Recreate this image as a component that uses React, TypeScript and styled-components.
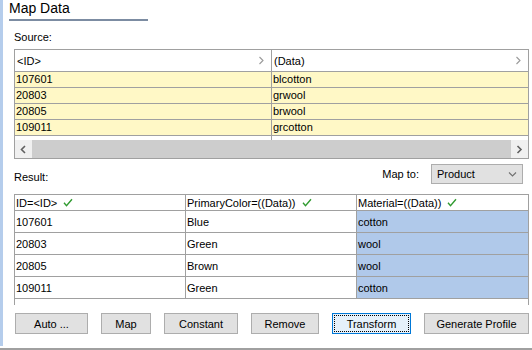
import React from "react";
import styled, { createGlobalStyle } from "styled-components";

const GlobalStyle = createGlobalStyle`
  body {
    margin: 0;
    background: #fff;
    font-family: "Liberation Sans", Arial, sans-serif;
    font-size: 11px;
    color: #000;
  }
`;

const sourceRows = [
  ["107601", "blcotton"],
  ["20803", "grwool"],
  ["20805", "brwool"],
  ["109011", "grcotton"],
];

const resultHeaders = ["ID=<ID>", "PrimaryColor=((Data))", "Material=((Data))"];

const resultRows = [
  ["107601", "Blue", "cotton"],
  ["20803", "Green", "wool"],
  ["20805", "Brown", "wool"],
  ["109011", "Green", "cotton"],
];

const buttons = [
  { label: "Auto ...", width: 73 },
  { label: "Map", width: 50 },
  { label: "Constant", width: 74 },
  { label: "Remove", width: 68 },
  { label: "Transform", width: 79, focused: true },
  { label: "Generate Profile", width: 105 },
];

const Chevron: React.FC<{ dir: "left" | "right" | "down"; color: string; bold?: boolean }> = ({
  dir,
  color,
  bold,
}) => {
  const d =
    dir === "left" ? "M5 1 L1.5 4.5 L5 8" : dir === "right" ? "M1.5 1 L5 4.5 L1.5 8" : "M1 1.5 L4.5 5 L8 1.5";
  const w = dir === "down" ? 9 : 7;
  const h = dir === "down" ? 7 : 9;
  return (
    <svg width={w} height={h} viewBox={`0 0 ${w} ${h}`}>
      <path d={d} fill="none" stroke={color} strokeWidth={bold ? 1.6 : 1.1} />
    </svg>
  );
};

const Check = () => (
  <svg width="10" height="9" viewBox="0 0 10 9">
    <path d="M1 4.8 L3.5 7.6 L9 1.2" fill="none" stroke="#2f9a2f" strokeWidth="1.4" />
  </svg>
);

const App: React.FC = () => {
  return (
    <>
      <GlobalStyle />
      <Page>
        <Main>
          <Stripe />
          <Content>
            <Title>Map Data</Title>
            <TitleRule />
            <Body>
              <Label>Source:</Label>
              <SourceFrame>
                <SourceGrid>
                  <SourceHead>
                    <span>&lt;ID&gt;</span>
                    <Chevron dir="right" color="#9a9a9a" />
                  </SourceHead>
                  <SourceHead>
                    <span>(Data)</span>
                    <Chevron dir="right" color="#9a9a9a" />
                  </SourceHead>
                  {sourceRows.map(([id, data]) => (
                    <React.Fragment key={id + data}>
                      <SourceCell>{id}</SourceCell>
                      <SourceCell>{data}</SourceCell>
                    </React.Fragment>
                  ))}
                  <SpacerCell />
                  <SpacerCell />
                </SourceGrid>
                <Scrollbar>
                  <ScrollButton>
                    <Chevron dir="left" color="#606060" bold />
                  </ScrollButton>
                  <ScrollThumb />
                  <ScrollButton>
                    <Chevron dir="right" color="#606060" bold />
                  </ScrollButton>
                </Scrollbar>
              </SourceFrame>

              <ResultBar>
                <ResultLabel>Result:</ResultLabel>
                <MapTo>Map to:</MapTo>
                <Select>
                  <span>Product</span>
                  <Chevron dir="down" color="#707070" />
                </Select>
              </ResultBar>

              <ResultFrame>
                <ResultGrid>
                  {resultHeaders.map((h, i) => (
                    <ResultHeadCell key={h} $last={i === 2}>
                      <span>{h}</span>
                      <Check />
                    </ResultHeadCell>
                  ))}
                  {resultRows.map((row) =>
                    row.map((cell, i) => (
                      <ResultCell key={row[0] + i} $last={i === 2} $blue={i === 2}>
                        {cell}
                      </ResultCell>
                    ))
                  )}
                </ResultGrid>
              </ResultFrame>

              <ButtonRow>
                {buttons.map((b) => (
                  <Button key={b.label} $w={b.width} $focused={!!b.focused}>
                    {b.label}
                  </Button>
                ))}
              </ButtonRow>
            </Body>
          </Content>
        </Main>
        <BottomRule />
      </Page>
    </>
  );
};

const Page = styled.div`
  width: 532px;
  height: 350px;
  display: flex;
  flex-direction: column;
  overflow: hidden;
`;

const Main = styled.div`
  display: flex;
  height: 346px;
`;

const Stripe = styled.div`
  width: 3px;
  background: #b5cdec;
`;

const Content = styled.div`
  flex: 1;
  padding-left: 6px;
  display: flex;
  flex-direction: column;
`;

const Title = styled.div`
  font-size: 14px;
  line-height: 16px;
  height: 16px;
`;

const TitleRule = styled.div`
  width: 139px;
  height: 2px;
  margin-top: 3px;
  background: #7c8ca2;
`;

const Body = styled.div`
  padding: 10px 3px 0 5px;
  display: flex;
  flex-direction: column;
`;

const Label = styled.div`
  line-height: 13px;
`;

const SourceFrame = styled.div`
  margin-top: 5px;
  width: 515px;
  box-sizing: border-box;
  border: 1px solid #a0a0a0;
`;

const SourceGrid = styled.div`
  display: grid;
  grid-template-columns: 256px 256px;
  grid-template-rows: 21px repeat(4, 15px) 4px;
  gap: 1px;
  background: #a0a0a0;
`;

const SourceHead = styled.div`
  background: #fff;
  display: flex;
  align-items: center;
  justify-content: space-between;
  padding: 0 6px 0 2px;
`;

const SourceCell = styled.div`
  background: #fff8c6;
  line-height: 15px;
  padding-left: 1px;
`;

const SpacerCell = styled.div`
  background: #fff;
`;

const Scrollbar = styled.div`
  display: flex;
  height: 18px;
  background: #f0f0f0;
`;

const ScrollButton = styled.div`
  width: 17px;
  display: flex;
  align-items: center;
  justify-content: center;
`;

const ScrollThumb = styled.div`
  flex: 1;
  background: #cdcdcd;
`;

const ResultBar = styled.div`
  display: flex;
  align-items: flex-start;
  margin-top: 5px;
  height: 20px;
`;

const ResultLabel = styled.div`
  flex: 1;
  margin-top: 7px;
  line-height: 13px;
`;

const MapTo = styled.div`
  line-height: 20px;
  margin-right: 12px;
`;

const Select = styled.div`
  width: 92px;
  height: 20px;
  box-sizing: border-box;
  border: 1px solid #adadad;
  background: #e1e1e1;
  display: flex;
  align-items: center;
  justify-content: space-between;
  padding: 0 5px;
  margin-right: 6px;
`;

const ResultFrame = styled.div`
  margin-top: 10px;
  width: 515px;
  height: 111px;
  box-sizing: border-box;
  border: 1px solid #a0a0a0;
  border-bottom: none;
  background: #fff;
`;

const ResultGrid = styled.div`
  display: grid;
  grid-template-columns: 171px 171px 171px;
  grid-template-rows: 16px;
  grid-auto-rows: 22px;
`;

const ResultHeadCell = styled.div<{ $last: boolean }>`
  box-sizing: border-box;
  border-bottom: 1px solid #a0a0a0;
  border-right: ${(p) => (p.$last ? "none" : "1px solid #a0a0a0")};
  display: flex;
  align-items: center;
  gap: 6px;
  padding-left: 1px;
`;

const ResultCell = styled.div<{ $last: boolean; $blue: boolean }>`
  box-sizing: border-box;
  border-bottom: 1px solid #a0a0a0;
  border-right: ${(p) => (p.$last ? "none" : "1px solid #a0a0a0")};
  background: ${(p) => (p.$blue ? "#b0c9ea" : "#fff")};
  display: flex;
  align-items: center;
  padding-left: 1px;
`;

const ButtonRow = styled.div`
  display: flex;
  gap: 13px;
  margin-top: 8px;
  padding-left: 1px;
`;

const Button = styled.button<{ $w: number; $focused: boolean }>`
  position: relative;
  width: ${(p) => p.$w}px;
  height: 21px;
  box-sizing: border-box;
  padding: 0;
  border: 1px solid ${(p) => (p.$focused ? "#0078d7" : "#adadad")};
  background: ${(p) => (p.$focused ? "#e5f1fb" : "#e1e1e1")};
  font-family: inherit;
  font-size: 11px;
  color: #000;

  &::after {
    content: "";
    display: ${(p) => (p.$focused ? "block" : "none")};
    position: absolute;
    inset: 1px;
    border: 1px dotted #000;
  }
`;

const BottomRule = styled.div`
  height: 2px;
  margin-top: 2px;
  background: #a0a0a0;
`;

export default App;
